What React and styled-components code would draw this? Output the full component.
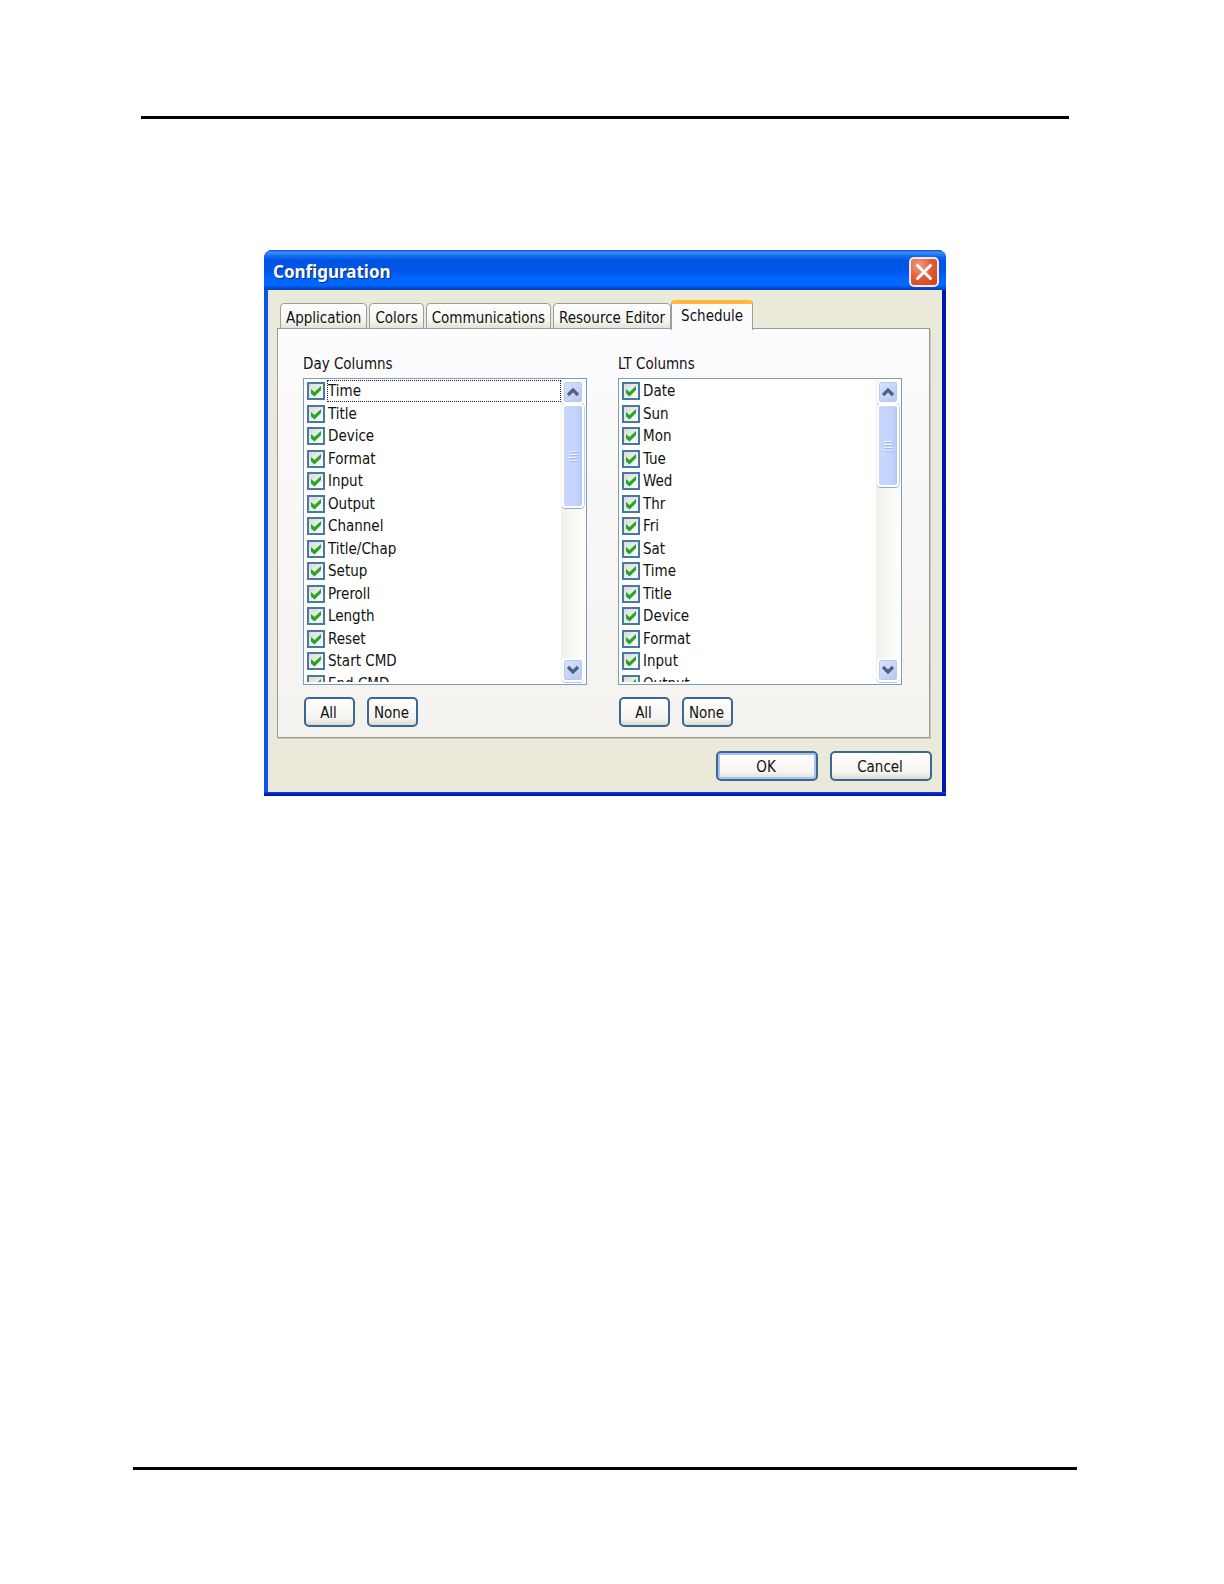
import React, { useState } from "react";
import styled, { createGlobalStyle } from "styled-components";

const GlobalStyle = createGlobalStyle`
  *, *::before, *::after { box-sizing: border-box; }
  body {
    margin: 0;
    background: #fff;
    color: #111;
    font-family: "DejaVu Sans Condensed", "Noto Sans", sans-serif;
    font-size: 15px;
    line-height: 20px;
  }
  button { font: inherit; color: inherit; cursor: default; }
`;

const Page = styled.div`
  display: flex;
  flex-direction: column;
  min-height: 100vh;
  padding: 116px 147px 114px 133px;
`;

const Rule = styled.hr`
  align-self: stretch;
  height: 3px;
  margin: ${(p) => (p.$footer ? "auto 0 0" : "0 8px 131px")};
  border: 0;
  background: #000;
`;

const Dialog = styled.section`
  align-self: center;
  width: 100%;
  max-width: 682px;
  border-radius: 8px 8px 0 0;
  background: linear-gradient(90deg, #0a55e8 0, #0a55e8 50%, #0018a8 100%);
  overflow: hidden;
`;

const TitleBar = styled.header`
  display: flex;
  align-items: center;
  justify-content: space-between;
  height: 40px;
  padding: 3px 7px 0 9px;
  background: linear-gradient(
    #0a50d0 0, #3a8dff 6%, #1570f5 14%, #0054e3 26%, #0055e8 52%,
    #0066ff 70%, #0068ff 88%, #0049c8 96%, #003fb4 100%
  );
`;

const Title = styled.h1`
  margin: 0;
  color: #fff;
  font-family: "Noto Sans", sans-serif;
  font-size: 17px;
  font-weight: 700;
  line-height: 24px;
  text-shadow: 1px 1px 1px #0a2a80;
`;

const CloseButton = styled.button`
  display: grid;
  place-items: center;
  width: 30px;
  height: 30px;
  padding: 0;
  border: 2px solid #f4e9ea;
  border-radius: 5px;
  background: radial-gradient(circle at 30% 25%, #f0a080 0, #e2603c 45%, #cf3c14 100%);
`;

const Body = styled.div`
  margin: 0 4px;
  padding: 10px 10px 11px 9px;
  background: #ebe9d9;
`;

const DialogEdge = styled.div`
  height: 4px;
  background: linear-gradient(#0a3fe0, #00109a);
`;

const TabList = styled.div`
  display: flex;
  align-items: flex-start;
  padding-left: 3px;
  margin-bottom: -2px;
  position: relative;
`;

const Tab = styled.button`
  height: ${(p) => (p.$active ? "30px" : "26px")};
  margin: ${(p) => (p.$active ? "0" : "3px 2px 0 0")};
  padding: ${(p) => (p.$active ? "0 9px 3px" : "3px 5px 0")};
  border: 1px solid #9a9f9c;
  border-top: ${(p) => (p.$active ? "4px solid #ffb938" : "1px solid #9a9f9c")};
  border-bottom: ${(p) => (p.$active ? "0" : "1px solid #9a9f9c")};
  border-radius: 4px 4px 0 0;
  background: ${(p) => (p.$active ? "#fcfcfe" : "linear-gradient(#fefefe, #f6f5f1 70%, #e4e1d6)")};
  white-space: nowrap;

  &:nth-child(4) { margin-right: 0; }
`;

const Panel = styled.div`
  display: flex;
  gap: 31px;
  margin-right: 2px;
  padding: 25px 27px 10px 25px;
  border: 1px solid #979b98;
  background: linear-gradient(#fcfcfe, #f3f2ee);
  box-shadow: 1px 1px 0 #c9c7ba;
`;

const Column = styled.div`
  flex: 1;
  min-width: 0;
`;

const ColumnTitle = styled.h2`
  margin: 0 0 4px;
  font-size: 15px;
  font-weight: 400;
`;

const ListBox = styled.div`
  display: flex;
  height: 307px;
  padding: 1px 1px 2px;
  border: 1px solid #7a9cc0;
  background: #fff;
`;

const Viewport = styled.div`
  flex: 1;
  min-width: 0;
  overflow: hidden;
`;

const Items = styled.ul`
  display: grid;
  grid-template-rows: repeat(14, 1fr);
  height: 315px;
  margin: 0;
  padding: 0 0 0 2px;
  list-style: none;
`;

const Item = styled.li`
  min-height: 0;
  display: flex;
  align-items: center;
`;

const ItemLabel = styled.label`
  flex: 1;
  display: flex;
  align-items: center;
  gap: 2px;
`;

const ItemText = styled.span`
  flex: 1;
  border: 1px dotted ${(p) => (p.$focused ? "#222" : "transparent")};
`;

const Tick = styled.span`
  display: grid;
  width: 18px;
  height: 18px;

  > * { grid-area: 1 / 1; }
  > svg { place-self: center; pointer-events: none; }
`;

const TickInput = styled.input`
  appearance: none;
  width: 18px;
  height: 18px;
  margin: 0;
  border: 2px solid #4a78a4;
  background: linear-gradient(135deg, #dcdcd6, #fbfbf9);
`;

const ScrollBar = styled.div`
  display: flex;
  flex-direction: column;
  width: 24px;
  padding: 0 1px;
  background: linear-gradient(90deg, #f1f0ea, #fefefc);
`;

const ScrollButton = styled.button`
  display: grid;
  place-items: center;
  width: 22px;
  height: 24px;
  padding: 0;
  border: 2px solid #fff;
  border-radius: 4px;
  background: linear-gradient(135deg, #dae4fe, #b4c6f5);
  box-shadow: inset 0 0 0 1px #b7c8f3, 0 1px 0 #b3c4e0;
`;

const ScrollTrack = styled.div`
  flex: 1;
`;

const Thumb = styled.div`
  display: grid;
  place-items: center;
  width: 22px;
  height: ${(p) => p.$size}px;
  border: 2px solid #fff;
  border-radius: 4px;
  background: linear-gradient(90deg, #c9d7fc, #c4d3fd 70%, #b4c7f5);
  box-shadow: 0 1px 0 #8fa9d4, 1px 0 0 #c3d0ea;
`;

const Actions = styled.div`
  display: flex;
  gap: 12px;
  padding: 12px 0 0 1px;
`;

const Button = styled.button`
  width: ${(p) => (p.$wide ? "102px" : "51px")};
  height: 30px;
  padding: 2px 2px 0 0;
  border: 2px solid #3b6890;
  border-radius: 5px;
  background: linear-gradient(#fff, #f5f4ef 75%, #dedacd);
  box-shadow: ${(p) => (p.$primary ? "inset 0 0 0 2px #a6c1f2" : "none")};
`;

const Footer = styled.footer`
  display: flex;
  justify-content: flex-end;
  gap: 12px;
  padding-top: 13px;
`;

const tabs = ["Application", "Colors", "Communications", "Resource Editor", "Schedule"];

const dayColumns = [
  "Time", "Title", "Device", "Format", "Input", "Output", "Channel",
  "Title/Chap", "Setup", "Preroll", "Length", "Reset", "Start CMD", "End CMD",
];

const ltColumns = [
  "Date", "Sun", "Mon", "Tue", "Wed", "Thr", "Fri",
  "Sat", "Time", "Title", "Device", "Format", "Input", "Output",
];

function Chevron({ down }) {
  return (
    <svg width="14" height="10" viewBox="0 0 14 10" fill="none" aria-hidden="true">
      <path d={down ? "M2 2l5 5 5-5" : "M2 8l5-5 5 5"} stroke="#4d6185" strokeWidth="3.2" />
    </svg>
  );
}

function ColumnPicker({ title, names, thumb, focused }) {
  const [checked, setChecked] = useState(() => names.map(() => true));
  const toggle = (i) => setChecked(checked.map((c, j) => (i === j ? !c : c)));

  return (
    <Column>
      <ColumnTitle>{title}</ColumnTitle>
      <ListBox>
        <Viewport>
          <Items>
            {names.map((name, i) => (
              <Item key={name}>
                <ItemLabel>
                  <Tick>
                    <TickInput type="checkbox" checked={checked[i]} onChange={() => toggle(i)} />
                    {checked[i] && (
                      <svg width="12" height="12" viewBox="0 0 12 12" aria-hidden="true">
                        <path d="M1 4L4.5 7 11 1v4L4.5 11.5 1 8.5z" fill="#27a52b" />
                      </svg>
                    )}
                  </Tick>
                  <ItemText $focused={name === focused}>{name}</ItemText>
                </ItemLabel>
              </Item>
            ))}
          </Items>
        </Viewport>
        <ScrollBar>
          <ScrollButton type="button" aria-label={`Scroll ${title} up`}><Chevron /></ScrollButton>
          <ScrollTrack>
            <Thumb $size={thumb}>
              <svg width="9" height="12" viewBox="0 0 9 12" aria-hidden="true">
                <path d="M0 1.5h8M0 4.5h8M0 7.5h8M0 10.5h8" stroke="#eef4fe" />
                <path d="M1 2.5h8M1 5.5h8M1 8.5h8M1 11.5h8" stroke="#9fb8ee" />
              </svg>
            </Thumb>
          </ScrollTrack>
          <ScrollButton type="button" aria-label={`Scroll ${title} down`}><Chevron down /></ScrollButton>
        </ScrollBar>
      </ListBox>
      <Actions>
        <Button type="button" onClick={() => setChecked(names.map(() => true))}>All</Button>
        <Button type="button" onClick={() => setChecked(names.map(() => false))}>None</Button>
      </Actions>
    </Column>
  );
}

export default function App() {
  return (
    <>
      <GlobalStyle />
      <Page>
        <Rule />
        <Dialog role="dialog" aria-labelledby="dialog-title">
          <TitleBar>
            <Title id="dialog-title">Configuration</Title>
            <CloseButton type="button" aria-label="Close">
              <svg width="18" height="18" viewBox="0 0 18 18" aria-hidden="true">
                <path d="M2.5 2.5l13 13M15.5 2.5l-13 13" stroke="#fff" strokeWidth="3" strokeLinecap="round" />
              </svg>
            </CloseButton>
          </TitleBar>
          <Body>
            <TabList role="tablist">
              {tabs.map((name) => (
                <Tab key={name} type="button" role="tab" aria-selected={name === "Schedule"} $active={name === "Schedule"}>
                  {name}
                </Tab>
              ))}
            </TabList>
            <Panel role="tabpanel" aria-label="Schedule">
              <ColumnPicker title="Day Columns" names={dayColumns} thumb={104} focused="Time" />
              <ColumnPicker title="LT Columns" names={ltColumns} thumb={83} />
            </Panel>
            <Footer>
              <Button type="button" $wide $primary>OK</Button>
              <Button type="button" $wide>Cancel</Button>
            </Footer>
          </Body>
          <DialogEdge />
        </Dialog>
        <Rule $footer />
      </Page>
    </>
  );
}
